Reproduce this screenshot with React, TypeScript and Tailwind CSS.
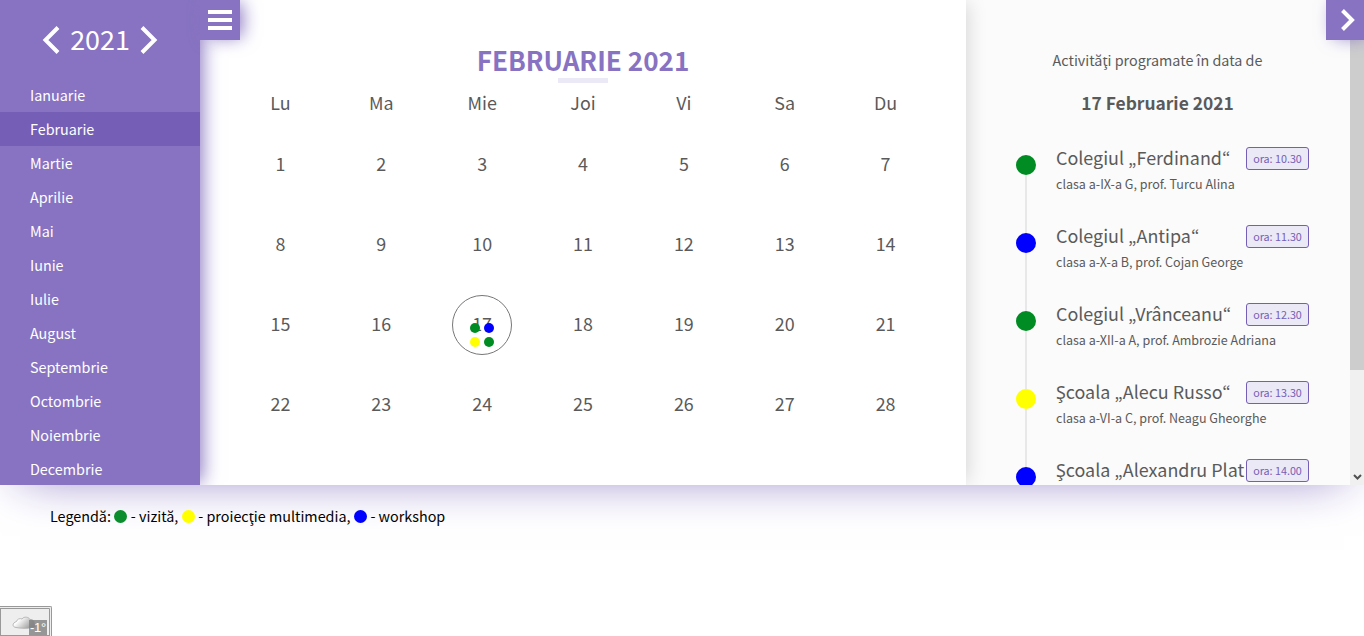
const months = ['Ianuarie', 'Februarie', 'Martie', 'Aprilie', 'Mai', 'Iunie', 'Iulie', 'August', 'Septembrie', 'Octombrie', 'Noiembrie', 'Decembrie'];
const weekdays = ['Lu', 'Ma', 'Mie', 'Joi', 'Vi', 'Sa', 'Du'];
const days = Array.from({ length: 28 }, (_, i) => i + 1);

const events = [
  { title: 'Colegiul „Ferdinand“', time: 'ora: 10.30', desc: 'clasa a-IX-a G, prof. Turcu Alina', dot: 'bg-[#008c23]' },
  { title: 'Colegiul „Antipa“', time: 'ora: 11.30', desc: 'clasa a-X-a B, prof. Cojan George', dot: 'bg-[#0000ff]' },
  { title: 'Colegiul „Vrânceanu“', time: 'ora: 12.30', desc: 'clasa a-XII-a A, prof. Ambrozie Adriana', dot: 'bg-[#008c23]' },
  { title: 'Şcoala „Alecu Russo“', time: 'ora: 13.30', desc: 'clasa a-VI-a C, prof. Neagu Gheorghe', dot: 'bg-[#ffff00]' },
  { title: 'Şcoala „Alexandru Plat', time: 'ora: 14.00', desc: '', dot: 'bg-[#0000ff]' },
];

function Sidebar() {
  return (
    <aside className="relative z-20 h-[485px] w-[200px] shrink-0 bg-[#8773c1] text-white shadow-[5px_0_18px_-3px_#8773c1]">
      <div className="flex h-[78px] items-center justify-center gap-[10px] pt-[2px]">
        <svg width="18" height="28" viewBox="0 0 18 28" fill="none" stroke="#fff" strokeWidth="4" strokeLinecap="butt">
          <path d="M16 1.5 3.5 14 16 26.5" />
        </svg>
        <span className="-mt-[2px] text-[26.9px] leading-[40px]">2021</span>
        <svg width="18" height="28" viewBox="0 0 18 28" fill="none" stroke="#fff" strokeWidth="4" strokeLinecap="butt">
          <path d="M2 1.5 14.5 14 2 26.5" />
        </svg>
      </div>
      <ul>
        {months.map((m) => (
          <li key={m} className={m === 'Februarie' ? 'h-[34px] bg-[#755eb5] pl-[30px] text-[14.35px] leading-[34px]' : 'h-[34px] pl-[30px] text-[14.35px] leading-[34px]'}>
            {m}
          </li>
        ))}
      </ul>
      <button className="absolute left-[200px] top-0 flex h-10 w-10 flex-col items-center justify-center gap-1 bg-[#8773c1] shadow-[5px_0_18px_-3px_#8773c1]">
        <span className="h-1 w-6 bg-white" />
        <span className="h-1 w-6 bg-white" />
        <span className="h-1 w-6 bg-white" />
      </button>
    </aside>
  );
}

function MonthGrid() {
  return (
    <main className="relative z-10 h-[485px] w-[766px] shrink-0 bg-white px-[30px] pt-[41px] text-[#5a5a5a] shadow-[5px_0_18px_-3px_rgba(0,0,0,0.15)]">
      <h1 className="h-[37px] text-center text-[26.1px] font-bold leading-[39px] text-[#8773c1]">FEBRUARIE 2021</h1>
      <div className="mx-auto h-[5px] w-[50px] bg-[#ebe9f5]" />
      <div className="grid grid-cols-7 text-center text-[17.9px]">
        {weekdays.map((d) => (
          <div key={d} className="h-[42px] leading-[39px]">{d}</div>
        ))}
        {days.map((d) => (
          <div key={d} className="flex h-20 items-center justify-center">
            {d === 17 ? (
              <div className="relative flex h-[60px] w-[60px] items-center justify-center rounded-full border border-[#777]">
                <span className="mb-[3px]">17</span>
                <div className="absolute left-[17px] top-[27px] grid grid-cols-2 gap-1">
                  <i className="h-[10px] w-[10px] rounded-full bg-[#008c23]" />
                  <i className="h-[10px] w-[10px] rounded-full bg-[#0000ff]" />
                  <i className="h-[10px] w-[10px] rounded-full bg-[#ffff00]" />
                  <i className="h-[10px] w-[10px] rounded-full bg-[#008c23]" />
                </div>
              </div>
            ) : (
              <span className="mb-[3px]">{d}</span>
            )}
          </div>
        ))}
      </div>
    </main>
  );
}

function EventPanel() {
  return (
    <section className="flex h-[485px] min-w-0 flex-1 overflow-hidden bg-[#fbfbfb] text-[#5a5a5a]">
      <div className="min-w-0 flex-1 pl-[50px] pr-[41px] pt-[48px]">
        <p className="mr-[10px] text-center text-[14.35px] leading-[24px]">Activităţi programate în data de</p>
        <h2 className="mr-[10px] mt-[16px] text-center text-[17.4px] font-bold leading-[30px]">17 Februarie 2021</h2>
        <ul className="pt-[25px]">
          {events.map((e) => (
            <li key={e.title} className="flex h-[78px]">
              <div className="flex w-5 shrink-0 flex-col items-center pt-[12px]">
                <i className={`h-5 w-5 shrink-0 rounded-full ${e.dot}`} />
                <span className="-mb-[12px] w-[2px] flex-1 bg-[#e8e8e8]" />
              </div>
              <div className="min-w-0 flex-1 pl-[20px]">
                <div className="flex h-[30px] items-center">
                  <span className="mb-[2px] w-[190px] shrink-0 whitespace-nowrap text-[17.92px] leading-[28px]">{e.title}</span>
                  <span className="mt-px h-[23px] w-[63px] shrink-0 rounded-[3px] border border-[#755eb5] bg-[#ebe9f5] text-center text-[10.75px] leading-[22px] text-[#755eb5]">{e.time}</span>
                </div>
                <p className="whitespace-nowrap text-[12.54px] leading-[22px]">{e.desc}</p>
              </div>
            </li>
          ))}
        </ul>
      </div>
      <div className="flex w-[14px] shrink-0 flex-col justify-between bg-[#f0f0f0]">
        <div className="h-[370px] bg-[#cdcdcd]" />
        <svg width="14" height="17" viewBox="0 0 14 17" fill="none" stroke="#505050" strokeWidth="2">
          <path d="M4 7 7.5 10.5 11 7" />
        </svg>
      </div>
    </section>
  );
}

function Legend() {
  return (
    <p className="flex items-center whitespace-pre pl-[50px] pt-[19px] text-[14.35px] leading-[24px] text-black">
      <span>Legendă: </span>
      <i className="mr-[0.5px] h-[13px] w-[13px] rounded-full bg-[#0b8c2d]" />
      <span> - vizită, </span>
      <i className="mr-[0.5px] h-[13px] w-[13px] rounded-full bg-[#ffff00]" />
      <span> - proiecţie multimedia, </span>
      <i className="mr-[0.5px] h-[13px] w-[13px] rounded-full bg-[#0000ff]" />
      <span> - workshop</span>
    </p>
  );
}

function WeatherBadge() {
  return (
    <div className="relative h-[30px] w-[52px] rounded-tr-[2px] border border-b-0 border-l-0 border-[#999] bg-[#eee]">
      <svg className="absolute left-0 top-0" width="51" height="29" viewBox="0 0 51 29">
        <defs>
          <linearGradient id="cloud" x1="0" y1="0" x2="1" y2="0.5">
            <stop offset="0.3" stopColor="#fff" />
            <stop offset="1" stopColor="#999" />
          </linearGradient>
        </defs>
        <path d="M0 1.500H49.500V29M.5 1V29M0 28.500H50" fill="none" stroke="#999" />
        <path d="M16 20.500C12 20 12 16 16.500 14.500 17 12 20 11 22 12 24 9 29 10 30 12.500 33 12 35 15 34 16.500 37 18 36 20.500 32 20.500 27 21.700 21 21.500 16 20.500Z" fill="url(#cloud)" stroke="#aaa" strokeWidth=".8" />
      </svg>
      <span className="absolute bottom-px right-[4px] h-[15px] w-[18px] bg-[#808080]/80 text-center font-['Liberation_Sans'] text-[13px] leading-[16px] tracking-[-0.3px] text-white">-1°</span>
    </div>
  );
}

export default function App() {
  return (
    <div className="flex h-[636px] w-[1364px] flex-col overflow-hidden bg-white font-['Noto_Sans_CJK_KR','Noto_Sans',sans-serif]">
      <div className="relative z-10 flex h-[485px] shrink-0 shadow-[0_10px_50px_-20px_#8773c1]">
        <div className="relative flex h-[485px] w-full overflow-hidden">
          <Sidebar />
          <MonthGrid />
          <EventPanel />
          <button className="absolute right-0 top-0 z-20 flex h-10 w-[38px] items-center bg-[#8773c1] pl-[15px] shadow-[5px_0_18px_-3px_#8773c1]">
            <svg width="15" height="24" viewBox="0 0 15 24" fill="none" stroke="#fff" strokeWidth="4">
              <path d="M1.500 2.500 11 12 1.500 21.500" />
            </svg>
          </button>
        </div>
      </div>
      <div className="relative z-20 flex flex-1 flex-col justify-between">
        <Legend />
        <WeatherBadge />
      </div>
    </div>
  );
}
